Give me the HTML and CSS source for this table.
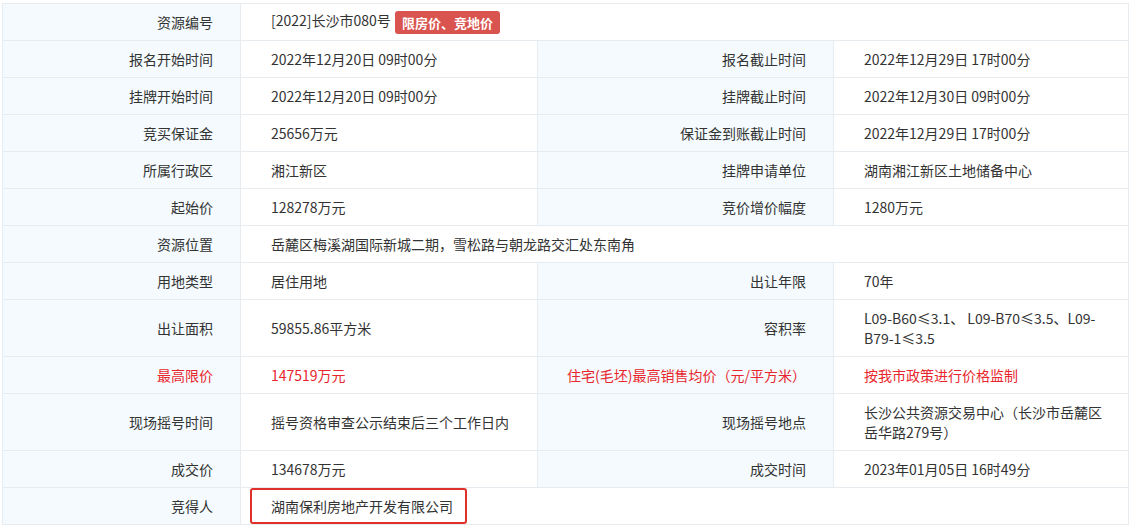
FILE: index.html
```html
<!DOCTYPE html>
<html>
  <head>
    <title>地块详情</title>
    <meta charset="utf-8">
    <link rel="stylesheet" href="styles.css">
  </head>
  <body>
    <div class="wrap">
      <table class="info">
        <colgroup>
          <col class="c-label1">
          <col class="c-val1">
          <col class="c-label2">
          <col class="c-val2">
        </colgroup>
        <tr>
          <th>资源编号</th>
          <td colspan="3" class="code-cell">[2022]长沙市080号 <span class="tag">限房价、竞地价</span></td>
        </tr>
        <tr>
          <th>报名开始时间</th>
          <td>2022年12月20日 09时00分</td>
          <th>报名截止时间</th>
          <td>2022年12月29日 17时00分</td>
        </tr>
        <tr>
          <th>挂牌开始时间</th>
          <td>2022年12月20日 09时00分</td>
          <th>挂牌截止时间</th>
          <td>2022年12月30日 09时00分</td>
        </tr>
        <tr>
          <th>竞买保证金</th>
          <td>25656万元</td>
          <th>保证金到账截止时间</th>
          <td>2022年12月29日 17时00分</td>
        </tr>
        <tr>
          <th>所属行政区</th>
          <td>湘江新区</td>
          <th>挂牌申请单位</th>
          <td>湖南湘江新区土地储备中心</td>
        </tr>
        <tr>
          <th>起始价</th>
          <td>128278万元</td>
          <th>竞价增价幅度</th>
          <td>1280万元</td>
        </tr>
        <tr>
          <th>资源位置</th>
          <td colspan="3">岳麓区梅溪湖国际新城二期，雪松路与朝龙路交汇处东南角</td>
        </tr>
        <tr>
          <th>用地类型</th>
          <td>居住用地</td>
          <th>出让年限</th>
          <td>70年</td>
        </tr>
        <tr>
          <th>出让面积</th>
          <td>59855.86平方米</td>
          <th>容积率</th>
          <td>L09-B60≤3.1、 L09-B70≤3.5、L09-B79-1≤3.5</td>
        </tr>
        <tr class="hot">
          <th>最高限价</th>
          <td>147519万元</td>
          <th>住宅(毛坯)最高销售均价（元/平方米）</th>
          <td>按我市政策进行价格监制</td>
        </tr>
        <tr>
          <th>现场摇号时间</th>
          <td>摇号资格审查公示结束后三个工作日内</td>
          <th>现场摇号地点</th>
          <td>长沙公共资源交易中心（长沙市岳麓区岳华路279号）</td>
        </tr>
        <tr>
          <th>成交价</th>
          <td>134678万元</td>
          <th>成交时间</th>
          <td>2023年01月05日 16时49分</td>
        </tr>
        <tr>
          <th>竞得人</th>
          <td colspan="3" class="winner-cell"><span class="winner">湖南保利房地产开发有限公司</span></td>
        </tr>
      </table>
    </div>
  </body>
</html>
```

FILE: styles.css
```css
*{
  margin: 0px;
  box-sizing: border-box;
}

body{
  background-color: white;
  font-family: "Noto Sans CJK SC", "Microsoft YaHei", sans-serif;
  font-size: 14px;
  color: #333;
}

.wrap{
  padding: 3px 2px 0px 2px;
}

.info{
  width: 1126px;
  border-collapse: collapse;
  table-layout: fixed;
  font-family: "Noto Sans CJK SC", "Microsoft YaHei", sans-serif;
  font-size: 14px;
  color: #333;
}

.c-label1{ width: 238px; }
.c-val1{ width: 297px; }
.c-label2{ width: 296px; }
.c-val2{ width: 295px; }

.info th, .info td{
  border: 1px solid #e6ecf0;
  padding: 8px 20px 8px 30px;
  line-height: 20px;
  height: 37px;
  font-weight: normal;
  vertical-align: middle;
}

.info th{
  background-color: #f4fafd;
  text-align: right;
  padding: 8px 27px 8px 5px;
}

.info td{
  text-align: left;
  background-color: white;
}

.hot th, .hot td{
  color: #e8262d;
}

.info td.code-cell{
  padding-top: 6px;
  padding-bottom: 6px;
}

.tag{
  display: inline-block;
  background-color: #d9534f;
  color: white;
  font-weight: bold;
  font-size: 13px;
  line-height: 21px;
  padding: 1px 7px;
  border-radius: 3px;
  margin-left: 1px;
  vertical-align: middle;
}

.info td.winner-cell{
  padding: 0px 0px 0px 9px;
}

.winner{
  display: inline-block;
  border: 2px solid #e0302a;
  border-radius: 3px;
  padding: 6px 12px 6px 19px;
  line-height: 20px;
  vertical-align: middle;
}
```
